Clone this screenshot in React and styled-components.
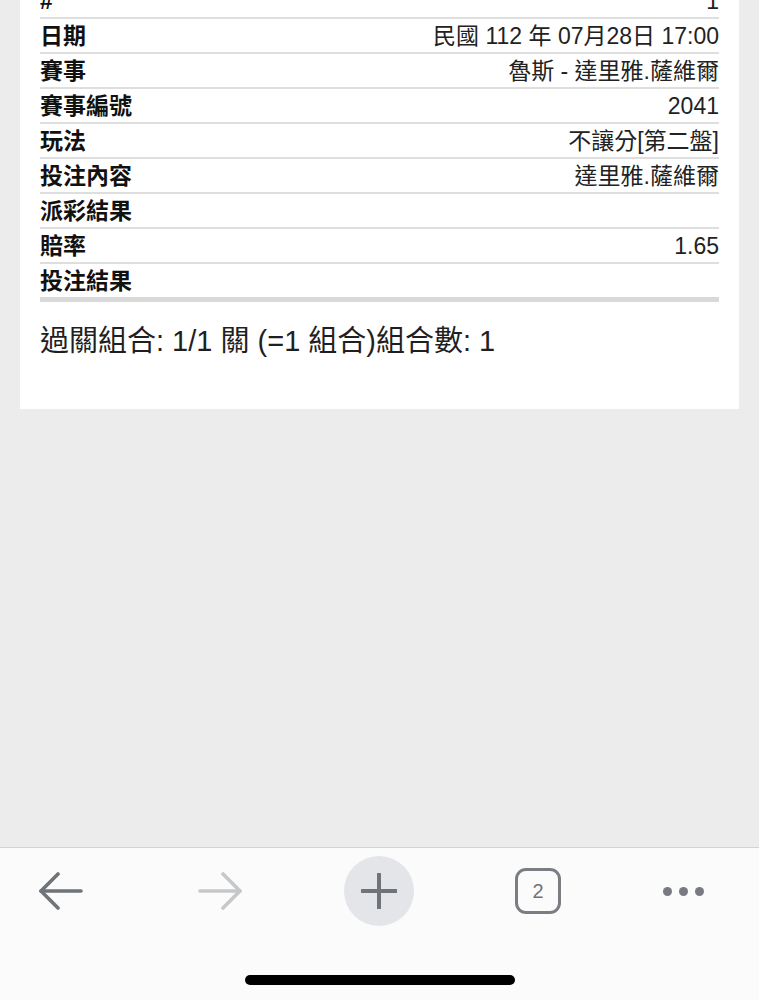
import React from "react";
import styled, { createGlobalStyle } from "styled-components";

const GlobalStyle = createGlobalStyle`
  html, body {
    margin: 0;
    padding: 0;
    background: #ececec;
  }
  body {
    font-family: "Liberation Sans", "Noto Sans CJK TC", sans-serif;
    color: #1c1c1c;
  }
  * { box-sizing: border-box; }
`;

const Page = styled.div`
  display: flex;
  flex-direction: column;
  height: 1000px;
  overflow: hidden;
`;

const Card = styled.section`
  margin: -16px 20px 0;
  padding: 0 20px 50px;
  background: #ffffff;
`;

const Row = styled.div`
  display: flex;
  justify-content: space-between;
  align-items: center;
  padding-top: 2px;
  border-bottom: ${(p) => (p.last ? "5px solid #d9d9d9" : "2px solid #dedede")};
  height: ${(p) => (p.last ? "38px" : "35px")};
  font-size: 23px;
  line-height: 1;
`;

const Label = styled.span`
  font-weight: 700;
  color: #111;
`;

const Value = styled.span`
  color: #222;
  white-space: nowrap;
`;

const Summary = styled.p`
  margin: 22px 0 0;
  font-size: 29px;
  line-height: 35px;
  color: #1f1f1f;
  white-space: nowrap;
`;

const Spacer = styled.div`
  flex: 1;
`;

const BottomBar = styled.nav`
  height: 153px;
  border-top: 1px solid #d4d4d4;
  background: #fbfbfb;
  display: flex;
  flex-direction: column;
`;

const IconRow = styled.div`
  height: 86px;
  display: flex;
  align-items: center;
  padding-left: 26px;
  gap: 89px;
`;

const NavItem = styled.div`
  flex: none;
  width: 70px;
  height: 70px;
  display: flex;
  align-items: center;
  justify-content: center;
  margin-left: ${(p) => p.shift || 0}px;
  border-radius: 50%;
  background: ${(p) => (p.filled ? "#e4e5e8" : "transparent")};
`;

const TabBox = styled.div`
  width: 46px;
  height: 46px;
  border: 3.5px solid #7a7e83;
  border-radius: 11px;
  display: flex;
  align-items: center;
  justify-content: center;
  font-size: 20px;
  color: #6f7479;
  font-family: "Liberation Sans", sans-serif;
`;

const Dots = styled.div`
  display: flex;
  gap: 7px;
`;

const Dot = styled.span`
  width: 9px;
  height: 9px;
  border-radius: 50%;
  background: #777b80;
`;

const HomeIndicator = styled.div`
  width: 270px;
  height: 10px;
  margin: 41px auto 0;
  border-radius: 5px;
  background: #000;
`;

const Arrow = ({ color, flip }) => (
  <svg
    width="46"
    height="38"
    viewBox="0 0 46 38"
    fill="none"
    stroke={color}
    strokeWidth="3.6"
    strokeLinecap="round"
    strokeLinejoin="round"
    style={flip ? { transform: "scaleX(-1)" } : undefined}
  >
    <path d="M3 19H43" />
    <path d="M20 2L3 19L20 36" />
  </svg>
);

const Plus = () => (
  <svg width="36" height="36" viewBox="0 0 36 36" stroke="#6f7479" strokeWidth="4" strokeLinecap="round">
    <path d="M18 1V35M1 18H35" />
  </svg>
);

const rows = [
  ["#", "1"],
  ["日期", "民國 112 年 07月28日 17:00"],
  ["賽事", "魯斯 - 達里雅.薩維爾"],
  ["賽事編號", "2041"],
  ["玩法", "不讓分[第二盤]"],
  ["投注內容", "達里雅.薩維爾"],
  ["派彩結果", ""],
  ["賠率", "1.65"],
  ["投注結果", ""],
];

export default function App() {
  return (
    <Page>
      <GlobalStyle />
      <Card>
        {rows.map(([label, value], i) => (
          <Row key={label} last={i === rows.length - 1}>
            <Label>{label}</Label>
            <Value>{value}</Value>
          </Row>
        ))}
        <Summary>過關組合: 1/1 關 (=1 組合)組合數: 1</Summary>
      </Card>
      <Spacer />
      <BottomBar>
        <IconRow>
          <NavItem>
            <Arrow color="#6f7479" />
          </NavItem>
          <NavItem>
            <Arrow color="#c6c7c9" flip />
          </NavItem>
          <NavItem filled>
            <Plus />
          </NavItem>
          <NavItem>
            <TabBox>2</TabBox>
          </NavItem>
          <NavItem shift={-14}>
            <Dots>
              <Dot />
              <Dot />
              <Dot />
            </Dots>
          </NavItem>
        </IconRow>
        <HomeIndicator />
      </BottomBar>
    </Page>
  );
}
